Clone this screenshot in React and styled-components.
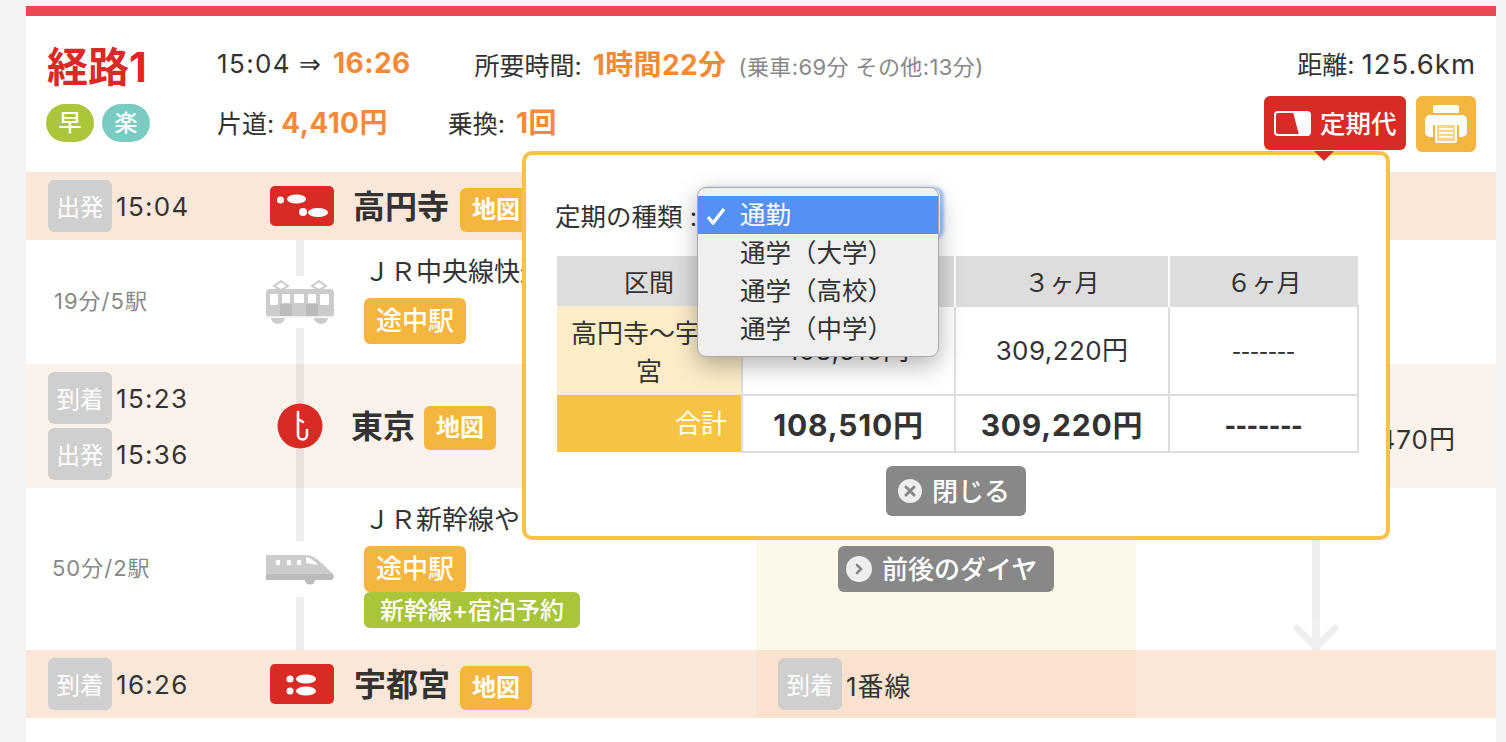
import React from "react";
import styled, { createGlobalStyle } from "styled-components";

const UI_FONT = `Inter, "Noto Sans CJK JP", "Noto Sans", sans-serif`;

const GlobalStyle = createGlobalStyle`
  html, body {
    margin: 0;
    height: 100%;
    overflow: hidden;
    background: #f4f4f4;
  }
  body {
    font-family: ${UI_FONT};
    font-size: 25px;
    color: #333;
  }
`;

const FootprintsIcon = ({ arrive }) => (
  <svg width="64" height="40" viewBox="0 0 64 40">
    <rect width="64" height="40" rx="5" fill="#d92a25" />
    {arrive ? (
      <g fill="#fff">
        <ellipse cx="20" cy="15" rx="3.5" ry="3.5" />
        <ellipse cx="36" cy="15" rx="10" ry="4.5" />
        <ellipse cx="20" cy="27" rx="3.5" ry="3.5" />
        <ellipse cx="36" cy="27" rx="10" ry="4.5" />
      </g>
    ) : (
      <g fill="#fff">
        <ellipse cx="10.5" cy="14" rx="3.5" ry="3.5" />
        <ellipse cx="26.5" cy="13" rx="9.5" ry="4.5" />
        <ellipse cx="33" cy="26" rx="4" ry="4" />
        <ellipse cx="48" cy="26.5" rx="10" ry="4.5" />
      </g>
    )}
  </svg>
);

const TrainIcon = () => (
  <svg width="68" height="44" viewBox="0 0 68 44">
    <path d="M15 1l7 5-7 4-7-4zM53 1l7 5-7 4-7-4z" fill="none" stroke="#ccc" strokeWidth="2" />
    <path d="M4 9h60a4 4 0 0 1 4 4v21a2 2 0 0 1-2 2H2a2 2 0 0 1-2-2V13a4 4 0 0 1 4-4z" fill="#ccc" />
    <rect x="14" y="24" width="12" height="12" fill="#bbb" />
    <rect x="40" y="24" width="12" height="12" fill="#bbb" />
    <g fill="#fff">
      <rect x="4" y="14" width="8" height="11" rx="1" />
      <rect x="16" y="14" width="8" height="9" rx="1" />
      <rect x="28" y="14" width="10" height="9" rx="1" />
      <rect x="42" y="14" width="8" height="9" rx="1" />
      <rect x="54" y="14" width="9" height="11" rx="1" />
    </g>
    <path d="M0 36h68v1.500H0z" fill="#eee" />
    <path d="M5 38h14a7 6 0 0 1-14 0zM48 38h14a7 6 0 0 1-14 0z" fill="#ccc" />
  </svg>
);

const BulletTrainIcon = () => (
  <svg width="68" height="32" viewBox="0 0 68 32">
    <path d="M0 2h40c9 0 17 9 26 18 3 3 2 7-2 7H0z" fill="#ccc" />
    <path d="M0 21h67c1 3 0 6-3 6H0z" fill="#bbb" />
    <g fill="#fff">
      <rect x="10" y="7" width="4" height="5" />
      <rect x="21" y="7" width="4" height="5" />
      <rect x="31" y="7" width="4" height="5" />
      <path d="M40 4c5 1 9 4 12 8l-12-2z" />
    </g>
    <path d="M39 27h10a5 4.500 0 0 1-10 0z" fill="#bbb" />
  </svg>
);

const TransferIcon = () => (
  <svg width="46" height="46" viewBox="0 0 46 46">
    <circle cx="23" cy="23" r="22.500" fill="#d92a25" />
    <path
      d="M21 9v23a4.500 4.500 0 0 0 9 0v-5M21 16l5 3"
      fill="none"
      stroke="#fff"
      strokeWidth="2.600"
      strokeLinecap="round"
    />
  </svg>
);

const PassIcon = () => (
  <svg width="37" height="25" viewBox="0 0 37 25">
    <rect x="1" y="1" width="35" height="23" rx="3" fill="#d92a25" stroke="#fff" strokeWidth="2" />
    <path d="M19 1h14a3 3 0 0 1 3 3v17a3 3 0 0 1-3 3H25z" fill="#fff" />
  </svg>
);

const PrinterIcon = () => (
  <svg width="42" height="38" viewBox="0 0 42 38">
    <path d="M10 0h22a2 2 0 0 1 2 2v6H8V2a2 2 0 0 1 2-2z" fill="#fff" />
    <path d="M5 10h32a5 5 0 0 1 5 5v12a5 5 0 0 1-5 5h-3V20H8v12H5a5 5 0 0 1-5-5V15a5 5 0 0 1 5-5z" fill="#fff" />
    <rect x="11" y="19" width="20" height="18" rx="1" fill="#f9d58c" stroke="#fff" strokeWidth="2" />
    <path d="M14 23h14v1.800H14zM14 27h14v1.800H14zM14 31h14v1.800H14z" fill="#fff" />
  </svg>
);

const CloseIcon = () => (
  <svg width="24" height="24" viewBox="0 0 24 24">
    <circle cx="12" cy="12" r="12" fill="#eee" />
    <path d="M8 8l8 8M16 8l-8 8" stroke="#888" strokeWidth="3" strokeLinecap="round" />
  </svg>
);

const ChevronIcon = () => (
  <svg width="26" height="26" viewBox="0 0 26 26">
    <circle cx="13" cy="13" r="13" fill="#eee" />
    <path d="M11 9l4 4-4 4" fill="none" stroke="#888" strokeWidth="2.600" strokeLinecap="round" />
  </svg>
);

const CheckIcon = () => (
  <svg width="20" height="18" viewBox="0 0 20 18">
    <path d="M2 10l5 6L18 2" fill="none" stroke="#fff" strokeWidth="3.400" />
  </svg>
);

const Card = styled.div`
  position: relative;
  margin: 6px 10px 0 26px;
  height: 736px;
  background: #fff;
  border-top: 10px solid #e94b52;
  overflow: hidden;
`;

const Header = styled.header`
  display: grid;
  grid-template-columns: 171px 1fr auto;
  grid-template-rows: 58px 58px;
  height: 156px;
  padding: 20px 20px 0;
  box-sizing: border-box;
`;

const RouteTitle = styled.h1`
  margin: 5px 0 0 1px;
  align-self: center;
  font-size: 41px;
  line-height: 1;
  font-weight: 700;
  color: #d92a25;
`;

const Pills = styled.div`
  display: flex;
  align-items: center;
  gap: 8px;
`;

const Pill = styled.span`
  width: 48px;
  height: 38px;
  border-radius: 19px;
  background: ${(p) => p.$color};
  color: #fff;
  font-size: 23px;
  font-weight: 500;
  line-height: 38px;
  text-align: center;
`;

const Summary = styled.div`
  display: flex;
  align-items: center;
  gap: ${(p) => p.$gap}px;
  padding-bottom: 4px;
  white-space: nowrap;
`;

const Term = styled.span`
  margin-right: ${(p) => p.$gap || 0}px;
`;

const Value = styled.b`
  color: #f58a36;
  font-size: 28px;
  font-weight: 700;
  letter-spacing: 0.4px;
`;

const Num = styled.span`
  font-size: ${(p) => p.$size}px;
  letter-spacing: ${(p) => p.$track}px;
`;

const Arrow = styled.span`
  margin: 0 12px 0 8px;
  font-family: "DejaVu Sans", sans-serif;
  font-size: 26px;
  font-weight: 300;
`;

const Note = styled.span`
  margin-left: 12px;
  color: #888;
  font-size: 22px;
  letter-spacing: 0.4px;
`;

const Distance = styled.div`
  align-self: center;
  padding-bottom: 4px;
  text-align: right;
`;

const Actions = styled.div`
  display: flex;
  align-items: flex-start;
  justify-content: flex-end;
  gap: 10px;
  padding-top: 2px;
`;

const PassButton = styled.button`
  display: flex;
  align-items: center;
  gap: 9px;
  width: 142px;
  height: 54px;
  padding: 0 0 0 10px;
  border: 0;
  border-radius: 6px;
  background: #d92a25;
  color: #fff;
  font: 500 25.5px ${UI_FONT};
  white-space: nowrap;
`;

const ButtonLabel = styled.span`
  padding-bottom: 4px;
`;

const PrintButton = styled.button`
  display: flex;
  align-items: center;
  justify-content: center;
  width: 60px;
  height: 56px;
  padding: 0;
  border: 0;
  border-radius: 6px;
  background: #f4b63f;
`;

const Row = styled.section`
  display: grid;
  grid-template-columns: 224px 100px 406px 380px 1fr;
  height: ${(p) => p.$height}px;
  background: ${(p) => p.$bg};
`;

const TimeCell = styled.div`
  display: flex;
  flex-direction: column;
  justify-content: center;
  gap: 4px;
  padding-left: 22px;
`;

const TimeLine = styled.div`
  display: flex;
  align-items: center;
  gap: 4px;
  font-size: 26px;
  letter-spacing: 1.3px;
`;

const Tag = styled.span`
  display: inline-block;
  width: 64px;
  height: 52px;
  border-radius: 6px;
  background: #cfcfcf;
  color: #fff;
  font-size: 23.5px;
  letter-spacing: 0;
  line-height: 55px;
  text-align: center;
`;

const Duration = styled.div`
  align-self: center;
  padding: 0 0 6px ${(p) => p.$inset}px;
  color: #888;
  font-size: 22px;
  letter-spacing: 1px;
`;

const IconCell = styled.div`
  display: flex;
  flex-direction: column;
  align-items: center;
  justify-content: center;
`;

const Track = styled.i`
  flex: 1;
  width: 8px;
  background: rgba(0, 0, 0, 0.065);
`;

const SegmentIcon = styled.div`
  display: flex;
  margin: ${(p) => p.$gap}px 0;
`;

const StationIcon = styled.div`
  display: flex;
  margin-left: 4px;
`;

const StationCell = styled.div`
  display: flex;
  align-items: center;
  gap: ${(p) => p.$gap}px;
  padding-left: ${(p) => p.$inset}px;
`;

const StationName = styled.span`
  padding-bottom: 4px;
  font-size: 32px;
  font-weight: 700;
  white-space: nowrap;
`;

const MapButton = styled.span`
  width: 72px;
  height: 44px;
  margin-top: ${(p) => p.$drop}px;
  border-radius: 6px;
  background: #f4b63f;
  color: #fff;
  font-size: 24px;
  font-weight: 700;
  line-height: 44px;
  text-align: center;
`;

const LineCell = styled.div`
  display: flex;
  flex-direction: column;
  align-items: flex-start;
  padding: 14px 0 0 14px;
`;

const LineName = styled.div`
  margin-bottom: 8px;
  font-size: 26px;
  line-height: 36px;
  white-space: nowrap;
`;

const StopsButton = styled.span`
  width: 102px;
  height: 46px;
  border-radius: 6px;
  background: #f4b63f;
  color: #fff;
  font-size: 26px;
  font-weight: 500;
  line-height: 46px;
  text-align: center;
`;

const HotelButton = styled.span`
  width: 216px;
  height: 36px;
  border-radius: 6px;
  background: #a9c53a;
  color: #fff;
  font-size: 24px;
  font-weight: 500;
  line-height: 38px;
  text-align: center;
  white-space: nowrap;
`;

const PlatformCell = styled.div`
  display: flex;
  align-items: center;
  justify-content: ${(p) => (p.$center ? "center" : "flex-start")};
  gap: 4px;
  padding-left: ${(p) => (p.$center ? 0 : 22)}px;
  background: ${(p) => p.$bg || "transparent"};
  font-size: 26px;
  letter-spacing: 1px;
`;

const TimetableButton = styled.span`
  display: flex;
  align-items: center;
  gap: 10px;
  width: 216px;
  height: 46px;
  padding-left: 8px;
  box-sizing: border-box;
  border-radius: 6px;
  background: #888;
  color: #fff;
  font-size: 26px;
  font-weight: 500;
  letter-spacing: 0;
`;

const FareCell = styled.div`
  display: flex;
  align-items: center;
  justify-content: flex-end;
  padding: 22px 40px 0 0;
  font-size: 26px;
  letter-spacing: 1px;
  white-space: nowrap;
`;

const ArrowCell = styled.div`
  display: flex;
  flex-direction: column;
  align-items: center;
`;

const Popup = styled.div`
  position: absolute;
  left: 496px;
  top: 135px;
  width: 868px;
  height: 389px;
  padding: 43px 28px 0 31px;
  box-sizing: border-box;
  background: #fff;
  border: 4px solid #f6c344;
  border-radius: 10px;
  &::before {
    content: "";
    position: absolute;
    top: -4px;
    right: 52px;
    border: 10px solid transparent;
    border-top: 10px solid #d92a25;
  }
`;

const KindRow = styled.div`
  display: flex;
  align-items: center;
  height: 36px;
  margin: 0 0 22px -2px;
  font-size: 25.500px;
`;

const KindLabel = styled.label`
  width: 142px;
  padding-bottom: 4px;
  white-space: nowrap;
`;

const SelectBox = styled.div`
  position: relative;
  width: 243px;
  height: 50px;
  margin-bottom: 6px;
  border-radius: 8px;
  box-shadow: 3px 0 3px 1px rgba(85, 145, 245, 0.5);
`;

const SelectMenu = styled.ul`
  position: absolute;
  top: -1px;
  left: 0;
  width: 242px;
  margin: 0;
  padding: 8px 0;
  list-style: none;
  box-sizing: border-box;
  background: #efefef;
  border: 1px solid #aaa;
  border-radius: 9px;
  box-shadow: 0 8px 24px rgba(0, 0, 0, 0.3);
`;

const SelectItem = styled.li`
  position: relative;
  height: 38px;
  padding-left: 42px;
  background: ${(p) => (p.$active ? "#5591f5" : "transparent")};
  color: ${(p) => (p.$active ? "#fff" : "#333")};
  font-size: 25.5px;
  line-height: 37px;
  svg {
    position: absolute;
    left: 8px;
    top: 11px;
  }
`;

const FareTable = styled.table`
  width: 801px;
  border-collapse: collapse;
  table-layout: fixed;
`;

const HeadCell = styled.th`
  height: 49px;
  padding: 0;
  background: #ddd;
  border-left: 2px solid #fff;
  font-size: 25px;
  font-weight: 400;
  &:first-child {
    border-left: 0;
  }
`;

const SectionCell = styled.td`
  padding: ${(p) => (p.$total ? 0 : 4)}px 14px 0;
  background: ${(p) => (p.$total ? "#f6c344" : "#fcedc7")};
  color: ${(p) => (p.$total ? "#fff" : "#333")};
  font-size: 26px;
  line-height: 38px;
  text-align: ${(p) => (p.$total ? "right" : "center")};
`;

const PriceCell = styled.td`
  height: ${(p) => (p.$total ? 53 : 83)}px;
  padding: 0 0 ${(p) => (p.$total ? 2 : 4)}px;
  border: 2px solid #ddd;
  font-size: ${(p) => (p.$total ? 30 : 26)}px;
  font-weight: ${(p) => (p.$total ? 700 : 400)};
  letter-spacing: ${(p) => (p.$total ? 0.8 : 0.4)}px;
  text-align: center;
`;

const Dashes = styled.span`
  font-family: "Noto Sans CJK JP", sans-serif;
  letter-spacing: 0;
`;

const PopupFooter = styled.div`
  display: flex;
  justify-content: center;
  margin: 13px 3px 0 0;
`;

const CloseButton = styled.button`
  display: flex;
  align-items: center;
  gap: 10px;
  width: 140px;
  height: 50px;
  padding: 0 0 0 12px;
  border: 0;
  border-radius: 6px;
  background: #888;
  color: #fff;
  font: 500 26px ${UI_FONT};
`;

const kinds = ["通勤", "通学（大学）", "通学（高校）", "通学（中学）"];

export default function App() {
  return (
    <>
      <GlobalStyle />
      <Card>
        <Header>
          <RouteTitle>経路1</RouteTitle>
          <Summary $gap={64}>
            <span>
              <Num $size={26} $track={1.4}>15:04</Num>
              <Arrow>⇒</Arrow>
              <Value>16:26</Value>
            </span>
            <span>
              <Term $gap={4}>所要時間: </Term>
              <Value>1時間22分</Value>
              <Note>(乗車:69分 その他:13分)</Note>
            </span>
          </Summary>
          <Distance>
            距離: <Num $size={27.5} $track={1}>125.6km</Num>
          </Distance>
          <Pills>
            <Pill $color="#acc63b">早</Pill>
            <Pill $color="#7accc3">楽</Pill>
          </Pills>
          <Summary $gap={60}>
            <span>
              <Term>片道: </Term>
              <Value>4,410円</Value>
            </span>
            <span>
              <Term $gap={4}>乗換: </Term>
              <Value>1回</Value>
            </span>
          </Summary>
          <Actions>
            <PassButton>
              <PassIcon />
              <ButtonLabel>定期代</ButtonLabel>
            </PassButton>
            <PrintButton>
              <PrinterIcon />
            </PrintButton>
          </Actions>
        </Header>

        <Row $height={68} $bg="#f9e8da">
          <TimeCell>
            <TimeLine>
              <Tag>出発</Tag>15:04
            </TimeLine>
          </TimeCell>
          <IconCell>
            <StationIcon>
              <FootprintsIcon />
            </StationIcon>
          </IconCell>
          <StationCell $inset={3} $gap={11}>
            <StationName>高円寺</StationName>
            <MapButton $drop={8}>地図</MapButton>
          </StationCell>
          <PlatformCell />
          <div />
        </Row>

        <Row $height={124} $bg="#fff">
          <Duration $inset={28}>19分/5駅</Duration>
          <IconCell>
            <Track />
            <SegmentIcon $gap={4}>
              <TrainIcon />
            </SegmentIcon>
            <Track />
          </IconCell>
          <LineCell>
            <LineName>ＪＲ中央線快速</LineName>
            <StopsButton>途中駅</StopsButton>
          </LineCell>
          <PlatformCell $bg="#fdf9e9" />
          <div />
        </Row>

        <Row $height={124} $bg="#fbf2ec">
          <TimeCell>
            <TimeLine>
              <Tag>到着</Tag>15:23
            </TimeLine>
            <TimeLine>
              <Tag>出発</Tag>15:36
            </TimeLine>
          </TimeCell>
          <IconCell>
            <Track />
            <TransferIcon />
            <Track />
          </IconCell>
          <StationCell $inset={1} $gap={9}>
            <StationName>東京</StationName>
            <MapButton $drop={4}>地図</MapButton>
          </StationCell>
          <PlatformCell />
          <FareCell>3,470円</FareCell>
        </Row>

        <Row $height={162} $bg="#fff">
          <Duration $inset={26}>50分/2駅</Duration>
          <IconCell>
            <Track />
            <SegmentIcon $gap={12}>
              <BulletTrainIcon />
            </SegmentIcon>
            <Track />
          </IconCell>
          <LineCell>
            <LineName>ＪＲ新幹線やまびこ</LineName>
            <StopsButton>途中駅</StopsButton>
            <HotelButton>新幹線+宿泊予約</HotelButton>
          </LineCell>
          <PlatformCell $center $bg="#fdf9e9">
            <TimetableButton>
              <ChevronIcon />
              <ButtonLabel>前後のダイヤ</ButtonLabel>
            </TimetableButton>
          </PlatformCell>
          <ArrowCell>
            <Track />
            <svg width="46" height="30" viewBox="0 0 46 30">
              <path d="M19 0h8v30h-8z" fill="#efefef" />
              <path d="M4 8l19 19L42 8" fill="none" stroke="#efefef" strokeWidth="7" strokeLinecap="round" />
            </svg>
          </ArrowCell>
        </Row>

        <Row $height={68} $bg="#f9e8da">
          <TimeCell>
            <TimeLine>
              <Tag>到着</Tag>16:26
            </TimeLine>
          </TimeCell>
          <IconCell>
            <StationIcon>
              <FootprintsIcon arrive />
            </StationIcon>
          </IconCell>
          <StationCell $inset={4} $gap={10}>
            <StationName>宇都宮</StationName>
            <MapButton $drop={8}>地図</MapButton>
          </StationCell>
          <PlatformCell $bg="#f9e3d0">
            <Tag>到着</Tag>1番線
          </PlatformCell>
          <div />
        </Row>

        <Popup>
          <KindRow>
            <KindLabel>定期の種類 :</KindLabel>
            <SelectBox>
              <SelectMenu>
                {kinds.map((kind, i) => (
                  <SelectItem key={kind} $active={i === 0}>
                    {i === 0 && <CheckIcon />}
                    {kind}
                  </SelectItem>
                ))}
              </SelectMenu>
            </SelectBox>
          </KindRow>
          <FareTable>
            <colgroup>
              <col width="185" />
              <col width="213" />
              <col width="214" />
              <col width="189" />
            </colgroup>
            <thead>
              <tr>
                <HeadCell>区間</HeadCell>
                <HeadCell>１ヶ月</HeadCell>
                <HeadCell>３ヶ月</HeadCell>
                <HeadCell>６ヶ月</HeadCell>
              </tr>
            </thead>
            <tbody>
              <tr>
                <SectionCell>高円寺〜宇都宮</SectionCell>
                <PriceCell>108,510円</PriceCell>
                <PriceCell>309,220円</PriceCell>
                <PriceCell>
                  <Dashes>-------</Dashes>
                </PriceCell>
              </tr>
              <tr>
                <SectionCell $total>合計</SectionCell>
                <PriceCell $total>108,510円</PriceCell>
                <PriceCell $total>309,220円</PriceCell>
                <PriceCell $total>
                  <Dashes>-------</Dashes>
                </PriceCell>
              </tr>
            </tbody>
          </FareTable>
          <PopupFooter>
            <CloseButton>
              <CloseIcon />
              <ButtonLabel>閉じる</ButtonLabel>
            </CloseButton>
          </PopupFooter>
        </Popup>
      </Card>
    </>
  );
}
